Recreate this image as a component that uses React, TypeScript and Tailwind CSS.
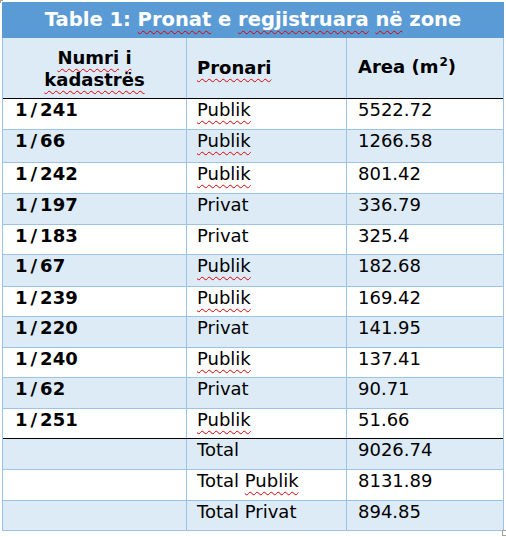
import React from "react";

type Row = { id: string; owner: string; area: string; h: string; bg: boolean; last?: boolean };

const W = ({ children }: { children: React.ReactNode }) => (
  <span className="underline decoration-wavy decoration-[#e00000] decoration-[1px] underline-offset-[4px]">{children}</span>
);

const rows: Row[] = [
  { id: "1/241", owner: "Publik", area: "5522.72", h: "h-[31px]", bg: false },
  { id: "1/66", owner: "Publik", area: "1266.58", h: "h-[33px]", bg: true },
  { id: "1/242", owner: "Publik", area: "801.42", h: "h-[31px]", bg: false },
  { id: "1/197", owner: "Privat", area: "336.79", h: "h-[31px]", bg: true },
  { id: "1/183", owner: "Privat", area: "325.4", h: "h-[30px]", bg: false },
  { id: "1/67", owner: "Publik", area: "182.68", h: "h-[32px]", bg: true },
  { id: "1/239", owner: "Publik", area: "169.42", h: "h-[30px]", bg: false },
  { id: "1/220", owner: "Privat", area: "141.95", h: "h-[31px]", bg: true },
  { id: "1/240", owner: "Publik", area: "137.41", h: "h-[30px]", bg: false },
  { id: "1/62", owner: "Privat", area: "90.71", h: "h-[31px]", bg: true },
  { id: "1/251", owner: "Publik", area: "51.66", h: "h-[30px]", bg: false, last: true },
];

const totals = [
  { label: <>Total</>, area: "9026.74", h: "h-[31px]", bg: true },
  { label: <>Total <W>Publik</W></>, area: "8131.89", h: "h-[31px]", bg: false },
  { label: <>Total Privat</>, area: "894.85", h: "h-[30px]", bg: true },
];

export default function App() {
  return (
    <div className="relative w-[506px] h-[537px] bg-white font-['DejaVu_Sans',Verdana,sans-serif] text-black">
      <div className="absolute left-0 top-0 w-[3px] h-[3px] border-l border-t border-[#a0a0a0]" />
      <div className="absolute left-[502px] top-[530px] w-[5px] h-[6px] border border-[#a0a0a0] bg-white" />
      <div className="pl-[2px] pt-[2px]">
        <div className="w-[502px] h-[36px] bg-[#5b9bd5] text-white font-bold text-[19.5px] leading-[22px] flex items-center justify-center">
          <span>
            Table 1: <W>Pronat</W> e <W>regjistruara</W> <W>në</W> zone
          </span>
        </div>
        <div className="w-[502px] border-x border-[#9dc3e6]">
          <div className="flex h-[61px] bg-[#ddebf7] border-b border-black text-[18px] font-bold leading-[22px]">
            <div className="w-[184px] border-r border-[#9dc3e6] flex flex-col items-center justify-center pt-[1px]">
              <span><W>Numri</W> <W>i</W></span>
              <span><W>kadastrës</W></span>
            </div>
            <div className="w-[160px] border-r border-[#9dc3e6] flex items-center pl-[10px] pb-[1px]">
              <W>Pronari</W>
            </div>
            <div className="flex-1 flex items-center pl-[11px] pb-[1px]">
              <span>
                Area (m<span className="text-[12px] relative -top-[7px] ml-[1px]">2</span>)
              </span>
            </div>
          </div>
          {rows.map((r) => {
            const [a, b] = r.id.split("/");
            return (
              <div
                key={r.id}
                className={`flex ${r.h} ${r.bg ? "bg-[#ddebf7]" : "bg-white"} border-b ${r.last ? "border-black" : "border-[#9dc3e6]"} text-[18px] leading-[22px]`}
              >
                <div className="w-[184px] border-r border-[#9dc3e6] pl-[12px] font-bold">
                  {a}
                  <span className="px-[3px]">/</span>
                  {b}
                </div>
                <div className="w-[160px] border-r border-[#9dc3e6] pl-[10px]">
                  {r.owner === "Publik" ? <W>Publik</W> : r.owner}
                </div>
                <div className="flex-1 pl-[11px]">{r.area}</div>
              </div>
            );
          })}
          {totals.map((t, i) => (
            <div
              key={i}
              className={`flex ${t.h} ${t.bg ? "bg-[#ddebf7]" : "bg-white"} border-b border-[#9dc3e6] text-[18px] leading-[22px]`}
            >
              <div className="w-[184px] border-r border-[#9dc3e6]" />
              <div className="w-[160px] border-r border-[#9dc3e6] pl-[10px]">{t.label}</div>
              <div className="flex-1 pl-[11px]">{t.area}</div>
            </div>
          ))}
        </div>
      </div>
    </div>
  );
}
